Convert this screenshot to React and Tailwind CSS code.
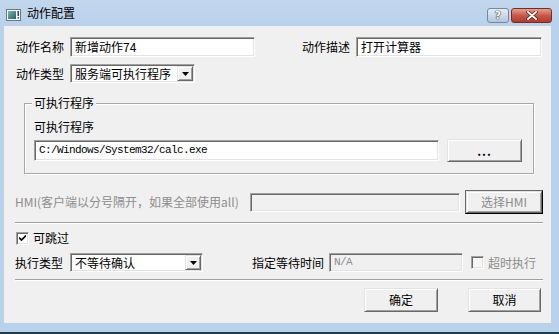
import React from "react";

const CJK = "font-['Noto_Sans_CJK_SC','Noto_Sans',sans-serif]";
const MONO = "font-['Liberation_Mono','Noto_Sans_CJK_SC',monospace]";

const sunken =
  "border border-t-[#a0a0a0] border-l-[#a0a0a0] border-r-white border-b-white shadow-[inset_1px_1px_0_#696969,inset_-1px_-1px_0_#e3e3e3]";
const raised =
  "bg-[#f0f0f0] border border-t-[#e3e3e3] border-l-[#e3e3e3] border-r-[#696969] border-b-[#696969] shadow-[inset_1px_1px_0_#fff,inset_-1px_-1px_0_#a0a0a0]";

const Field = ({ value, w, h = "h-[20px]", disabled, mono }) => (
  <div
    className={`${w} ${h} ${sunken} ${disabled ? "bg-[#f0f0f0] text-[#8d8d8d]" : "bg-white"} flex items-center pl-[4px] overflow-hidden`}
  >
    <span className={`${mono ? MONO + " text-[11px] tracking-[-0.6px]" : ""} leading-none whitespace-nowrap`}>{value}</span>
  </div>
);

const Combo = ({ value, w }) => (
  <div className={`${w} h-[19px] ${sunken} bg-white flex items-stretch p-[1px]`}>
    <span className="flex-1 pl-[3px] leading-[15px] whitespace-nowrap">{value}</span>
    <div className={`w-[16px] ${raised} flex items-center justify-center`}>
      <svg width="7" height="4" viewBox="0 0 7 4">
        <path d="M0 0h7L3.5 4z" fill="#000" />
      </svg>
    </div>
  </div>
);

const Button = ({ children, w, h = "h-[24px]", className = "" }) => (
  <div className={`${w} ${h} ${raised} flex items-center justify-center ${className}`}>{children}</div>
);

const Check = ({ checked, disabled }) => (
  <div className={`w-[13px] h-[13px] ${sunken} ${disabled ? "bg-[#f6f6f6]" : "bg-white"} flex items-center justify-center`}>
    {checked && (
      <svg width="7" height="7" viewBox="0 0 7 7">
        <path d="M0 2.5l2.5 2.5L7 0.5" stroke="#000" strokeWidth="1.6" fill="none" />
      </svg>
    )}
  </div>
);

const Separator = () => (
  <div className="ml-[11px] w-[528px] h-[2px] border-t border-t-[#a0a0a0] border-b border-b-white" />
);

export default function App() {
  return (
    <div className={`w-[559px] h-[334px] bg-[#b9d1ea] flex flex-col overflow-hidden ${CJK} text-[12px] text-black`}>
      {/* title bar */}
      <div className="h-[26px] flex items-start bg-gradient-to-b from-[#c2d7ed] to-[#b9d1ea]">
        <svg className="mt-[9px] ml-[6px]" width="15" height="12" viewBox="0 0 15 12">
          <rect x="0.5" y="0.5" width="14" height="11" fill="#f4f6f8" stroke="#6b7784" />
          <defs>
            <linearGradient id="ic" x1="0" y1="0" x2="1" y2="1">
              <stop offset="0" stopColor="#7fb7a4" />
              <stop offset="1" stopColor="#1f5f6e" />
            </linearGradient>
          </defs>
          <rect x="2" y="2" width="8" height="8" fill="url(#ic)" />
          <rect x="11.5" y="2" width="1.5" height="5" fill="#3b4650" />
          <rect x="11.5" y="8" width="1.5" height="1.5" fill="#3b4650" />
        </svg>
        <span className="ml-[6px] mt-[5px] leading-[16px] text-[12px]">动作配置</span>
        <div className="flex-1" />
        <div className="mt-[8px] w-[22px] h-[15px] rounded-[3px] border border-[#7089a6] bg-gradient-to-b from-[#e4edf7] to-[#b2c6dc] flex items-center justify-center">
          <span className="font-['DejaVu_Sans',sans-serif] font-bold text-[11px] leading-none text-white [text-shadow:0_0_1px_#333,0_0_1px_#333,0_0_1px_#333]">?</span>
        </div>
        <div className="mt-[8px] ml-[2px] mr-[7px] w-[41px] h-[15px] rounded-[3px] border border-[#7a2c24] bg-gradient-to-b from-[#e2a092] via-[#c9584a] to-[#b13a2d] flex items-center justify-center">
          <svg width="12" height="9" viewBox="0 0 12 9">
            <path d="M2 1l8 7M10 1l-8 7" stroke="#4a1712" strokeWidth="3.4" strokeLinecap="round" />
            <path d="M2 1l8 7M10 1l-8 7" stroke="#fff" strokeWidth="2" strokeLinecap="round" />
          </svg>
        </div>
      </div>

      {/* client */}
      <div className="flex-1 bg-[#f0f0f0] ml-[4px] mr-[8px] flex flex-col">
        <div className="mt-[11px] flex items-center">
          <span className="w-[66px] pl-[12px]">动作名称</span>
          <Field w="w-[185px]" value="新增动作74" />
          <span className="ml-[47px] w-[54px]">动作描述</span>
          <Field w="w-[186px]" value="打开计算器" />
        </div>

        <div className="mt-[7px] flex items-center">
          <span className="w-[66px] pl-[12px]">动作类型</span>
          <Combo w="w-[125px]" value="服务端可执行程序" />
        </div>

        {/* group box */}
        <div className="mt-[20px] ml-[20px] w-[510px] h-[71px] relative border border-[#a8a8a8] shadow-[inset_1px_1px_0_#fff,1px_1px_0_#fff] flex flex-col pl-[9px]">
          <span className="absolute left-[7px] top-[-9px] px-[2px] bg-[#f0f0f0] leading-[16px]">可执行程序</span>
          <span className="mt-[15px] leading-[16px]">可执行程序</span>
          <div className="mt-[4px] flex items-center h-[23px]">
            <Field w="w-[405px]" h="h-[21px]" value="C:/Windows/System32/calc.exe" mono />
            <Button w="w-[75px]" h="h-[23px]" className="ml-[8px]">
              <span className="font-bold tracking-[1px] leading-none">...</span>
            </Button>
          </div>
        </div>

        <div className="mt-[16px] flex items-center h-[24px]">
          <span className="w-[246px] pl-[11px] text-[#8d8d8d] whitespace-nowrap">
            HMI(客户端以分号隔开，如果全部使用all)
          </span>
          <Field w="w-[210px]" h="h-[19px]" disabled value="" />
          <div className="ml-[5px] w-[78px] h-[24px] border border-black border-t-[#696969] border-l-[#696969]">
            <Button w="w-full" h="h-full" className="text-[#8d8d8d]">选择HMI</Button>
          </div>
        </div>

        <div className="mt-[8px]">
          <Separator />
        </div>

        <div className="mt-[7px] flex items-center h-[14px] pl-[12px]">
          <Check checked />
          <span className="ml-[4px] leading-none">可跳过</span>
        </div>

        <div className="mt-[8px] flex items-center h-[19px]">
          <span className="w-[66px] pl-[11px]">执行类型</span>
          <Combo w="w-[133px]" value="不等待确认" />
          <span className="ml-[49px] w-[77px]">指定等待时间</span>
          <Field w="w-[134px]" h="h-[19px]" disabled mono value="N/A" />
          <div className="ml-[8px]">
            <Check disabled />
          </div>
          <span className="ml-[4px] text-[#8d8d8d]">超时执行</span>
        </div>

        <div className="mt-[7px]">
          <Separator />
        </div>

        <div className="mt-[7px] flex">
          <Button w="w-[74px]" className="ml-[360px]">确定</Button>
          <Button w="w-[73px]" className="ml-[30px]">取消</Button>
        </div>
      </div>

      <div className="h-[9px]" />
      <div className="h-[2px] bg-[#1e3d4c]" />
    </div>
  );
}
